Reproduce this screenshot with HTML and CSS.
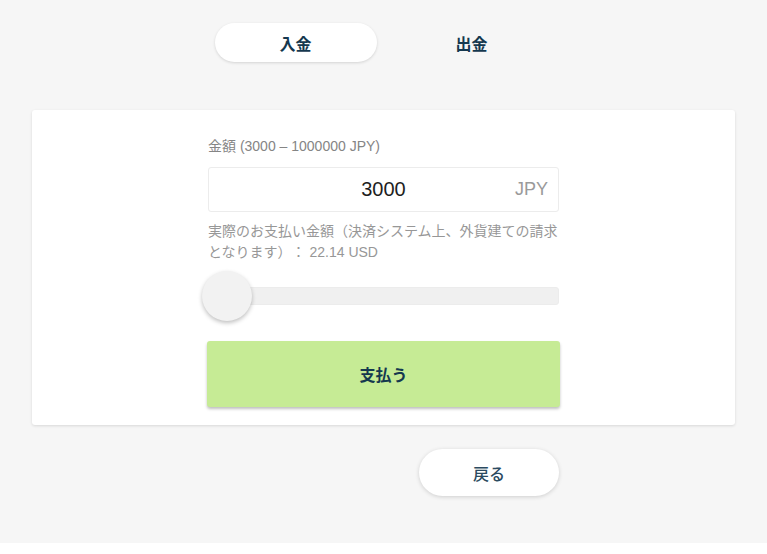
FILE: index.html
```html
<!DOCTYPE html>
<html lang="ja">
<head>
<meta charset="utf-8">
<title>入金</title>
<link rel="stylesheet" href="styles.css">
</head>
<body>
<div class="page">
  <nav class="tabs">
    <div class="tab tab-active">入金</div>
    <div class="tab">出金</div>
  </nav>
  <section class="card">
    <div class="form">
      <div class="label">金額 (3000 – 1000000 JPY)</div>
      <div class="amount">
        <span class="amount-value">3000</span>
        <span class="amount-cur">JPY</span>
      </div>
      <p class="note">実際のお支払い金額（決済システム上、外貨建ての請求となります）： 22.14 USD</p>
      <div class="slider">
        <div class="track"></div>
        <div class="thumb"></div>
      </div>
      <button class="pay">支払う</button>
    </div>
  </section>
  <div class="back-row">
    <button class="back">戻る</button>
  </div>
</div>
</body>
</html>
```
FILE: styles.css
```css
html { background: #ffffff; }
body {
  margin: 0;
  font-family: "Liberation Sans", "Noto Sans CJK JP", sans-serif;
  text-spacing-trim: space-all;
}
.page {
  background: #f6f6f6;
  height: 543px;
  padding-top: 23px;
  box-sizing: border-box;
}
.tabs {
  display: flex;
  justify-content: center;
  gap: 14px;
}
.tab {
  width: 162px;
  height: 39px;
  border-radius: 20px;
  display: flex;
  align-items: center;
  justify-content: center;
  font-family: "Noto Sans CJK JP", sans-serif;
  font-weight: 700;
  font-size: 16px;
  color: #15384f;
}
.tab-active {
  background: #ffffff;
  box-shadow: 0 1px 3px rgba(0,0,0,0.14);
}
.card {
  margin: 48px 32px 0;
  background: #ffffff;
  border-radius: 3px;
  box-shadow: 0 1px 3px rgba(0,0,0,0.12);
  padding: 27px 0 18px;
}
.form {
  width: 351px;
  margin: 0 auto;
}
.label {
  font-size: 14px;
  line-height: 18px;
  color: #858585;
  margin-bottom: 12px;
}
.amount {
  height: 45px;
  box-sizing: border-box;
  border: 1px solid #ececec;
  border-radius: 3px;
  display: flex;
  align-items: center;
  position: relative;
  justify-content: center;
}
.amount-value {
  font-size: 20px;
  color: #1e1e1e;
}
.amount-cur {
  position: absolute;
  right: 10px;
  font-size: 18px;
  color: #9a9a9a;
}
.note {
  margin: 9px 0 0;
  font-size: 14px;
  line-height: 21px;
  color: #979797;
}
.slider {
  position: relative;
  height: 50px;
  margin-top: 8px;
}
.track {
  position: relative;
  top: 16px;
  height: 18px;
  background: #f0f0f0;
  border: 1px solid #ececec;
  box-sizing: border-box;
  border-radius: 3px;
}
.thumb {
  position: absolute;
  left: -6px;
  top: 0;
  width: 50px;
  height: 50px;
  border-radius: 50%;
  background: #f2f2f2;
  box-shadow: 0 2px 4px rgba(0,0,0,0.25);
}
.pay {
  display: block;
  width: 353px;
  margin: 20px 0 0 -1px;
  height: 66px;
  border: none;
  border-radius: 3px;
  background: #c6eb95;
  box-shadow: 0 2px 3px rgba(0,0,0,0.25);
  font-family: "Noto Sans CJK JP", sans-serif;
  font-weight: 700;
  font-size: 16px;
  color: #15384f;
}
.back-row {
  width: 351px;
  margin: 24px auto 0;
  display: flex;
  justify-content: flex-end;
}
.back {
  width: 140px;
  height: 47px;
  border: none;
  border-radius: 24px;
  background: #ffffff;
  box-shadow: 0 1px 4px rgba(0,0,0,0.16);
  font-family: "Noto Sans CJK JP", sans-serif;
  font-weight: 500;
  font-size: 16px;
  color: #2b4a60;
}
```
